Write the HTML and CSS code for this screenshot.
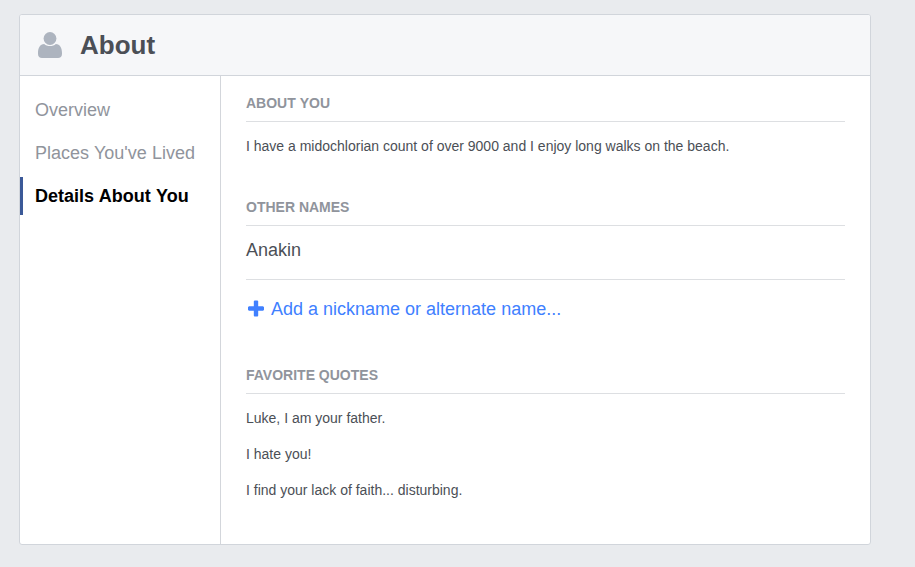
FILE: index.html
```html
<!DOCTYPE html>
<html lang="en">
<head>
<meta charset="utf-8">
<title>About</title>
<link rel="stylesheet" href="styles.css">
</head>
<body>
<main class="panel">
  <header class="panel-header">
    <svg class="user-icon" viewBox="0 0 24 26" aria-hidden="true"><circle cx="12" cy="6.5" r="6.4"/><path d="M6.200 12C7.600 13.400 9.600 14.100 12 14.100s4.400-.700 5.800-2.100C22 12 24 16 24 21v1c0 2.500-1.600 4-4 4H4C1.600 26 0 24.500 0 22v-1C0 16 2 12 6.200 12z"/></svg>
    <h1>About</h1>
  </header>
  <div class="panel-body">
    <nav class="sidebar">
      <a class="tab">Overview</a>
      <a class="tab">Places You've Lived</a>
      <a class="tab active">Details About You</a>
    </nav>
    <div class="content">
      <section class="about">
        <h2>About You</h2>
        <p>I have a midochlorian count of over 9000 and I enjoy long walks on the beach.</p>
      </section>
      <section class="names">
        <h2>Other Names</h2>
        <div class="name">Anakin</div>
        <a class="add"><svg class="plus-icon" viewBox="0 0 16 16" aria-hidden="true"><path d="M16 6.400v2.200q0 .450-.320.770t-.770.320H10.200v4.720q0 .450-.320.770t-.770.320H6.900q-.450 0-.770-.320t-.320-.770V9.690H1.090q-.450 0-.770-.320T0 8.600V6.400q0-.450.320-.770t.770-.320h4.720V.590q0-.450.320-.770t.770-.320h2.210q.450 0 .770.320t.320.770v4.720h4.710q.450 0 .770.320t.320.770z"/></svg><span>Add a nickname or alternate name...</span></a>
      </section>
      <section class="quotes">
        <h2>Favorite Quotes</h2>
        <p>Luke, I am your father.</p>
        <p>I hate you!</p>
        <p>I find your lack of faith... disturbing.</p>
      </section>
    </div>
  </div>
</main>
</body>
</html>
```
FILE: styles.css
```css
* { box-sizing: border-box; }
body {
  margin: 0;
  padding: 14px 0 0 19px;
  background: #e9ebee;
  color: #4b4f56;
  font-family: "Liberation Sans", Arial, sans-serif;
  font-size: 14px;
  line-height: 20px;
}
.panel {
  width: 852px;
  height: 531px;
  display: flex;
  flex-direction: column;
  background: #fff;
  border: 1px solid #d1d5db;
  border-radius: 3px;
  overflow: hidden;
}
.panel-header {
  height: 61px;
  flex: none;
  display: flex;
  align-items: center;
  padding-left: 18px;
  background: #f6f7f9;
  border-bottom: 1px solid #d1d5db;
}
.user-icon {
  width: 24px;
  height: 26px;
  margin-right: 18px;
  fill: #adb4bf;
}
h1 {
  margin: 0;
  font-size: 26px;
  line-height: 30px;
}
.panel-body {
  flex: 1;
  display: flex;
}
.sidebar {
  width: 201px;
  flex: none;
  padding-top: 15px;
  border-right: 1px solid #d3d6db;
}
.tab {
  display: block;
  height: 38px;
  margin-bottom: 5px;
  padding-left: 12px;
  border-left: 3px solid transparent;
  color: #90949c;
  font-size: 18px;
  line-height: 38px;
  word-spacing: 0.2px;
}
.tab.active {
  border-left-color: #3b5998;
  color: #000;
  font-weight: bold;
  word-spacing: 0.5px;
}
.content {
  flex: 1;
  padding: 17px 25px 0;
}
section { margin-bottom: 41px; }
h2 {
  margin: 0 0 14px;
  padding-bottom: 8px;
  border-bottom: 1px solid #dddfe2;
  color: #90949c;
  font-size: 14px;
  line-height: 20px;
  text-transform: uppercase;
}
.about h2 { word-spacing: 0.3px; }
p { margin: 0 0 16px; }
.name {
  height: 40px;
  border-bottom: 1px solid #dddfe2;
  font-size: 18px;
}
.add {
  display: flex;
  align-items: center;
  margin-top: 19px;
  margin-bottom: 46px;
  padding-left: 2px;
  color: #4080ff;
  font-size: 18px;
}
.plus-icon {
  width: 16px;
  height: 16px;
  margin-right: 7px;
  fill: currentColor;
  overflow: visible;
}
```
